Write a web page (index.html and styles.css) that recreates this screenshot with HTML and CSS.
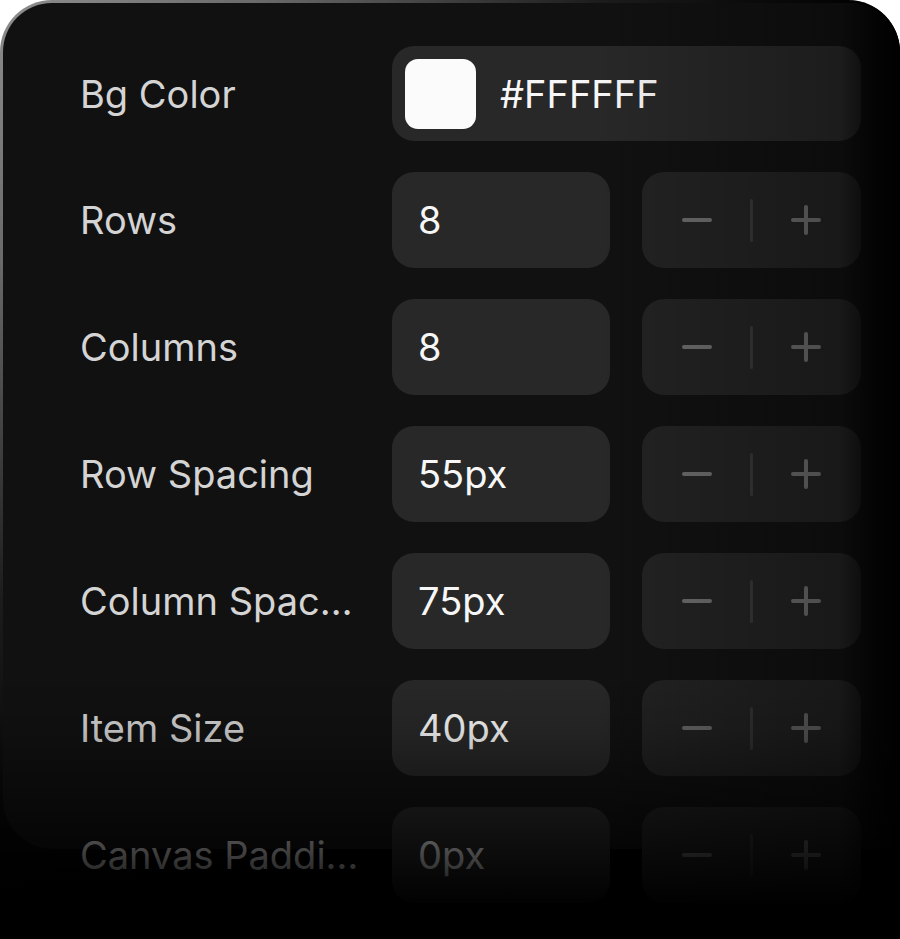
FILE: index.html
```html
<!DOCTYPE html>
<html lang="en">
<head>
<meta charset="utf-8">
<title>Grid settings</title>
<link rel="stylesheet" href="styles.css">
</head>
<body>
<div class="frame">
  <div class="panel">
    <div class="row">
      <span class="label">Bg Color</span>
      <div class="color-field">
        <span class="swatch"></span>
        <span class="hex">#FFFFFF</span>
      </div>
    </div>
    <div class="row">
      <span class="label">Rows</span>
      <div class="field">8</div>
      <div class="stepper"><span class="minus"></span><span class="divider"></span><span class="plus"></span></div>
    </div>
    <div class="row">
      <span class="label">Columns</span>
      <div class="field">8</div>
      <div class="stepper"><span class="minus"></span><span class="divider"></span><span class="plus"></span></div>
    </div>
    <div class="row">
      <span class="label">Row Spacing</span>
      <div class="field">55px</div>
      <div class="stepper"><span class="minus"></span><span class="divider"></span><span class="plus"></span></div>
    </div>
    <div class="row">
      <span class="label">Column Spacing</span>
      <div class="field">75px</div>
      <div class="stepper"><span class="minus"></span><span class="divider"></span><span class="plus"></span></div>
    </div>
    <div class="row">
      <span class="label">Item Size</span>
      <div class="field">40px</div>
      <div class="stepper"><span class="minus"></span><span class="divider"></span><span class="plus"></span></div>
    </div>
    <div class="row">
      <span class="label">Canvas Padding</span>
      <div class="field">0px</div>
      <div class="stepper"><span class="minus"></span><span class="divider"></span><span class="plus"></span></div>
    </div>
  </div>
  <div class="fade fade-right"></div>
  <div class="fade fade-bottom"></div>
</div>
</body>
</html>
```

FILE: styles.css
```css
* { box-sizing: border-box; }

html, body {
  margin: 0;
  background: #ffffff;
}

.frame {
  position: relative;
  width: 900px;
  height: 939px;
  overflow: hidden;
  border-radius: 52px 52px 0 0;
  padding: 3px 0 0 3px;
  background: radial-gradient(circle at 0 0, #8e8e8e 0, #6a6a6a 260px, #1c1c1c 600px, #000 900px);
  font-family: Inter, "Noto Sans", sans-serif;
}

.panel {
  height: 846px;
  background: #111111;
  border-radius: 49px 49px 0 50px;
  padding: 43px 0 0 77px;
  display: flex;
  flex-direction: column;
  gap: 31px;
}

.row {
  display: grid;
  grid-template-columns: 280px 218px 219px;
  column-gap: 32px;
  align-items: center;
  height: 96px;
  flex: none;
}

.row:first-child { height: 95px; }

.label {
  font-size: 38px;
  font-weight: 400;
  color: #d4d4d4;
  white-space: nowrap;
  overflow: hidden;
  text-overflow: ellipsis;
  min-width: 0;
}

.color-field {
  grid-column: 2 / 4;
  height: 95px;
  background: #282828;
  border-radius: 22px;
  display: flex;
  align-items: center;
  padding-left: 13px;
  gap: 24px;
}

.swatch {
  width: 71px;
  height: 70px;
  border-radius: 13px;
  background: #fbfbfb;
}

.hex, .field {
  font-size: 38px;
  color: #f7f7f7;
}

.field {
  height: 96px;
  background: #282828;
  border-radius: 22px;
  display: flex;
  align-items: center;
  padding-left: 26px;
}

.stepper {
  height: 96px;
  background: #232323;
  border-radius: 22px;
  display: flex;
  align-items: center;
  justify-content: center;
  gap: 38px;
}

.minus, .plus {
  position: relative;
  width: 30px;
  height: 30px;
}

.minus::before, .plus::before, .plus::after {
  content: "";
  position: absolute;
  background: #6c6c6c;
  border-radius: 2px;
}

.minus::before, .plus::before {
  left: 0;
  right: 0;
  top: 13px;
  height: 4px;
}

.plus::after {
  top: 0;
  bottom: 0;
  left: 13px;
  width: 4px;
}

.divider {
  width: 3px;
  height: 43px;
  background: #383838;
  border-radius: 2px;
}

.fade {
  position: absolute;
  inset: 0;
  pointer-events: none;
}

.fade-right {
  background: linear-gradient(to right,
    rgba(0,0,0,0) 0,
    rgba(0,0,0,0) 595px,
    rgba(0,0,0,0.3) 840px,
    rgba(0,0,0,0.75) 872px,
    #000 900px);
}

.fade-bottom {
  background: linear-gradient(to bottom,
    rgba(0,0,0,0) 0,
    rgba(0,0,0,0) 670px,
    rgba(0,0,0,0.12) 730px,
    rgba(0,0,0,0.72) 856px,
    rgba(0,0,0,0.95) 900px,
    #000 920px);
}
```
